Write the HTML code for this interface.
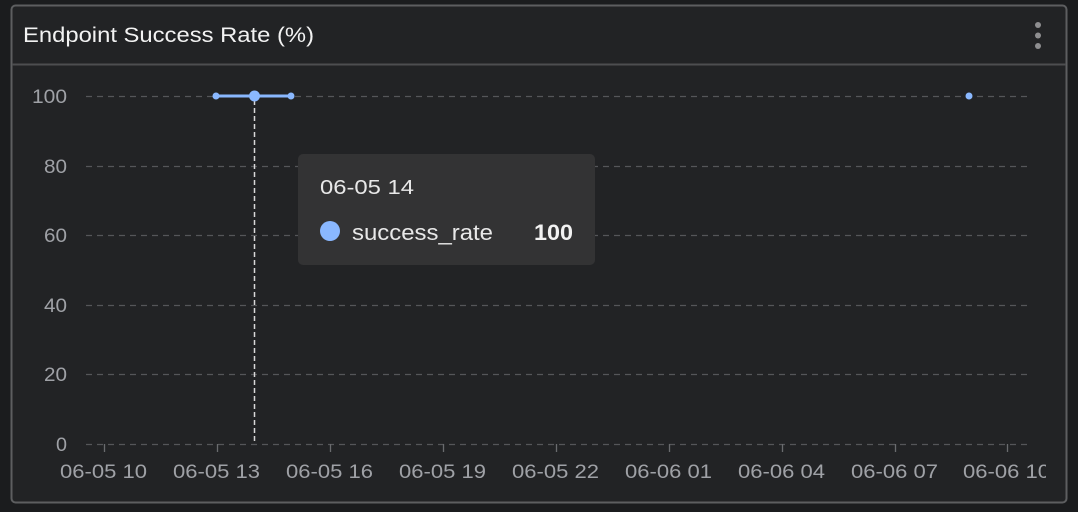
<!DOCTYPE html>
<html><head><meta charset="utf-8">
<style>
html,body{margin:0;padding:0;background:#1b1c1e;width:1078px;height:512px;overflow:hidden}
svg{display:block}
text{font-family:"Liberation Sans",Arial,sans-serif}
</style></head><body>
<svg width="1078" height="512" viewBox="0 0 1078 512">
  <rect x="0" y="0" width="1078" height="512" fill="#1b1c1e"/>
  <rect x="11.5" y="5.5" width="1055" height="497" rx="4" fill="#222325" stroke="#5d5e60" stroke-width="2"/>
  <line x1="12" y1="64.5" x2="1066" y2="64.5" stroke="#4d4e50" stroke-width="2"/>
  <text x="23" y="42" font-size="21" fill="#f2f2f2" textLength="291" lengthAdjust="spacingAndGlyphs">Endpoint Success Rate (%)</text>
  <circle cx="1038" cy="25" r="3" fill="#8e8e90"/>
  <circle cx="1038" cy="35.5" r="3" fill="#8e8e90"/>
  <circle cx="1038" cy="46" r="3" fill="#8e8e90"/>
  <g stroke="#555659" stroke-width="1.3" stroke-dasharray="6 5">
    <line x1="86" y1="96.5" x2="1027" y2="96.5"/>
    <line x1="86" y1="166.5" x2="1027" y2="166.5"/>
    <line x1="86" y1="235.5" x2="1027" y2="235.5"/>
    <line x1="86" y1="305.5" x2="1027" y2="305.5"/>
    <line x1="86" y1="374.5" x2="1027" y2="374.5"/>
    <line x1="86" y1="444.5" x2="1027" y2="444.5"/>
  </g>
  <g stroke="#6a6b6e" stroke-width="1.3">
    <line x1="104.5" y1="444" x2="104.5" y2="452"/>
    <line x1="217.5" y1="444" x2="217.5" y2="452"/>
    <line x1="330.5" y1="444" x2="330.5" y2="452"/>
    <line x1="443.5" y1="444" x2="443.5" y2="452"/>
    <line x1="556.5" y1="444" x2="556.5" y2="452"/>
    <line x1="669.5" y1="444" x2="669.5" y2="452"/>
    <line x1="782.5" y1="444" x2="782.5" y2="452"/>
    <line x1="895.5" y1="444" x2="895.5" y2="452"/>
    <line x1="1007.5" y1="444" x2="1007.5" y2="452"/>
  </g>
  <g font-size="19" fill="#9fa1a6">
    <text x="32" y="103" textLength="35" lengthAdjust="spacingAndGlyphs">100</text>
    <text x="44" y="173" textLength="23" lengthAdjust="spacingAndGlyphs">80</text>
    <text x="44" y="242" textLength="23" lengthAdjust="spacingAndGlyphs">60</text>
    <text x="44" y="312" textLength="23" lengthAdjust="spacingAndGlyphs">40</text>
    <text x="44" y="381" textLength="23" lengthAdjust="spacingAndGlyphs">20</text>
    <text x="56" y="451" textLength="11" lengthAdjust="spacingAndGlyphs">0</text>
  </g>
  <defs><clipPath id="c"><rect x="12" y="450" width="1034" height="40"/></clipPath></defs>
  <g font-size="19" fill="#9fa1a6" clip-path="url(#c)">
    <text x="60" y="478" textLength="87" lengthAdjust="spacingAndGlyphs">06-05 10</text>
    <text x="173" y="478" textLength="87" lengthAdjust="spacingAndGlyphs">06-05 13</text>
    <text x="286" y="478" textLength="87" lengthAdjust="spacingAndGlyphs">06-05 16</text>
    <text x="399" y="478" textLength="87" lengthAdjust="spacingAndGlyphs">06-05 19</text>
    <text x="512" y="478" textLength="87" lengthAdjust="spacingAndGlyphs">06-05 22</text>
    <text x="625" y="478" textLength="87" lengthAdjust="spacingAndGlyphs">06-06 01</text>
    <text x="738" y="478" textLength="87" lengthAdjust="spacingAndGlyphs">06-06 04</text>
    <text x="851" y="478" textLength="87" lengthAdjust="spacingAndGlyphs">06-06 07</text>
    <text x="963" y="478" textLength="87" lengthAdjust="spacingAndGlyphs">06-06 10</text>
  </g>
  <line x1="254.5" y1="100" x2="254.5" y2="444" stroke="#d8d8d8" stroke-width="1.5" stroke-dasharray="5 3"/>
  <line x1="216" y1="96" x2="291" y2="96" stroke="#8ab8ff" stroke-width="3"/>
  <circle cx="216" cy="96" r="3.5" fill="#8ab8ff"/>
  <circle cx="291" cy="96" r="3.5" fill="#8ab8ff"/>
  <circle cx="254.5" cy="96" r="5.5" fill="#8ab8ff"/>
  <circle cx="969" cy="96" r="3.5" fill="#8ab8ff"/>
  <rect x="298" y="154" width="297" height="111" rx="5" fill="#333334"/>
  <text x="320" y="194" font-size="20" fill="#e8e8e8" textLength="94" lengthAdjust="spacingAndGlyphs">06-05 14</text>
  <circle cx="330" cy="231" r="10" fill="#8ab8ff"/>
  <text x="352" y="240" font-size="22" fill="#e8e8e8" textLength="141" lengthAdjust="spacingAndGlyphs">success_rate</text>
  <text x="534" y="240" font-size="22" font-weight="bold" fill="#f2f2f2" textLength="39" lengthAdjust="spacingAndGlyphs">100</text>
</svg>
</body></html>
